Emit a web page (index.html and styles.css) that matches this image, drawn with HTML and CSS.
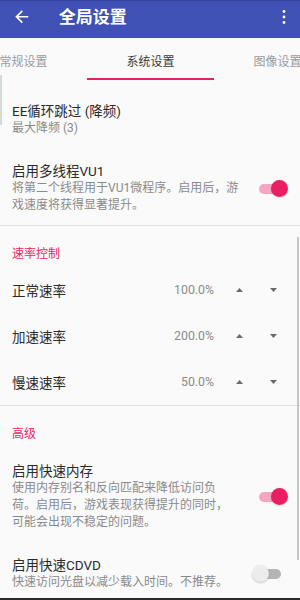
FILE: index.html
```html
<!DOCTYPE html>
<html lang="zh-CN">
<head>
<meta charset="utf-8">
<title>全局设置</title>
<link rel="stylesheet" href="styles.css">
</head>
<body>
<div class="screen">
  <header class="appbar">
    <svg class="back" viewBox="0 0 24 24" width="19.5" height="19.5"><path d="M20 11H7.83l5.59-5.59L12 4l-8 8 8 8 1.41-1.41L7.83 13H20v-2z" fill="#fff"/></svg>
    <div class="title">全局设置</div>
    <svg class="more" viewBox="0 0 4 16" width="4" height="16"><circle cx="2" cy="2.5" r="1.4" fill="#fff"/><circle cx="2" cy="8" r="1.4" fill="#fff"/><circle cx="2" cy="13.5" r="1.4" fill="#fff"/></svg>
  </header>
  <nav class="tabs">
    <div class="tab">常规设置</div>
    <div class="tab active">系统设置</div>
    <div class="tab">图像设置</div>
  </nav>
  <main class="list">
    <div class="pref">
      <div class="text">
        <div class="ptitle">EE循环跳过 (降频)</div>
        <div class="psub">最大降频 (3)</div>
      </div>
    </div>
    <div class="pref last">
      <div class="text">
        <div class="ptitle">启用多线程VU1</div>
        <div class="psub">将第二个线程用于VU1微程序。启用后，游<br>戏速度将获得显著提升。</div>
      </div>
      <div class="switch on"><span class="track"></span><span class="thumb"></span></div>
    </div>
    <div class="divider"></div>
    <div class="section">速率控制</div>
    <div class="rate">
      <div class="rlabel">正常速率</div>
      <div class="rvalue">100.0%</div>
      <div class="rbtn"><svg viewBox="0 0 7 4" width="7" height="4"><polygon points="0,4 3.5,0 7,4" fill="#6a6a6a"/></svg></div>
      <div class="rbtn"><svg viewBox="0 0 7 4" width="7" height="4"><polygon points="0,0 7,0 3.5,4" fill="#6a6a6a"/></svg></div>
    </div>
    <div class="rate">
      <div class="rlabel">加速速率</div>
      <div class="rvalue">200.0%</div>
      <div class="rbtn"><svg viewBox="0 0 7 4" width="7" height="4"><polygon points="0,4 3.5,0 7,4" fill="#6a6a6a"/></svg></div>
      <div class="rbtn"><svg viewBox="0 0 7 4" width="7" height="4"><polygon points="0,0 7,0 3.5,4" fill="#6a6a6a"/></svg></div>
    </div>
    <div class="rate">
      <div class="rlabel">慢速速率</div>
      <div class="rvalue">50.0%</div>
      <div class="rbtn"><svg viewBox="0 0 7 4" width="7" height="4"><polygon points="0,4 3.5,0 7,4" fill="#6a6a6a"/></svg></div>
      <div class="rbtn"><svg viewBox="0 0 7 4" width="7" height="4"><polygon points="0,0 7,0 3.5,4" fill="#6a6a6a"/></svg></div>
    </div>
    <div class="divider"></div>
    <div class="section sec2">高级</div>
    <div class="pref">
      <div class="text">
        <div class="ptitle">启用快速内存</div>
        <div class="psub">使用内存别名和反向匹配来降低访问负<br>荷。启用后，游戏表现获得提升的同时，<br>可能会出现不稳定的问题。</div>
      </div>
      <div class="switch on"><span class="track"></span><span class="thumb"></span></div>
    </div>
    <div class="pref">
      <div class="text">
        <div class="ptitle">启用快速CDVD</div>
        <div class="psub">快速访问光盘以减少载入时间。不推荐。</div>
      </div>
      <div class="switch"><span class="track"></span><span class="thumb"></span></div>
    </div>
  </main>
  <div class="edge"></div>
  <div class="scrollbar"></div>
  <div class="bottomline"></div>
</div>
</body>
</html>
```
FILE: styles.css
```css
html, body {
  margin: 0;
  padding: 0;
}
body {
  background: #fafafa;
  font-family: Roboto, "Noto Sans CJK SC", sans-serif;
}
.screen {
  position: relative;
  width: 300px;
  height: 600px;
  overflow: hidden;
  background: #fafafa;
}
.appbar {
  height: 38px;
  box-sizing: border-box;
  padding-bottom: 5px;
  background: #3f51b5;
  display: flex;
  align-items: center;
  border-top: 1px solid #34449a;
}
.back {
  margin-left: 11.75px;
  flex: 0 0 auto;
}
.title {
  margin-left: 27.5px;
  color: #fff;
  font-size: 17px;
  font-weight: 700;
  line-height: 20px;
  flex: 1;
}
.more {
  margin-right: 14.5px;
}
.tabs {
  height: 42px;
  display: flex;
  margin-left: -40px;
  background: #fafafa;
}
.tab {
  flex: 0 0 127px;
  box-sizing: border-box;
  padding-top: 4px;
  border-bottom: 2px solid transparent;
  display: flex;
  align-items: center;
  justify-content: center;
  font-size: 12px;
  color: #9a9a9a;
}
.tab.active {
  color: #3a3a3a;
  border-bottom-color: #e91e63;
}
.list {
  padding-top: 10px;
}
.pref {
  display: flex;
  align-items: center;
  padding: 13px 12px;
}
.pref.last {
  padding-bottom: 11px;
}
.text {
  flex: 1;
  min-width: 0;
}
.ptitle {
  font-size: 13.5px;
  line-height: 17px;
  color: #2a2a2a;
}
.psub {
  font-size: 12px;
  line-height: 17px;
  color: #8a8a8a;
}
.switch {
  position: relative;
  flex: 0 0 36px;
  height: 17px;
  margin-left: 4px;
}
.track {
  position: absolute;
  left: 7px;
  right: 7px;
  top: 3.5px;
  height: 10px;
  border-radius: 5px;
  background: #b5b5b5;
}
.thumb {
  position: absolute;
  left: 0;
  top: 0;
  width: 17px;
  height: 17px;
  border-radius: 50%;
  background: #ececec;
  box-shadow: 0 1px 2px rgba(0,0,0,0.2);
}
.switch.on .track {
  background: #f4a6c2;
}
.switch.on .thumb {
  left: auto;
  right: 0;
  background: #e91e63;
  box-shadow: 0 1px 2px rgba(0,0,0,0.15);
}
.divider {
  height: 1px;
  background: #e2e2e2;
}
.section {
  padding: 20px 12px 5px;
  font-size: 12px;
  line-height: 16px;
  color: #e91e63;
}
.section.sec2 {
  padding-bottom: 7.5px;
}
.rate {
  height: 46px;
  display: flex;
  align-items: center;
  padding: 0 10px 0 12px;
}
.rlabel {
  flex: 1;
  font-size: 13.5px;
  color: #2a2a2a;
}
.rvalue {
  font-size: 12.3px;
  color: #8a8a8a;
  margin-right: 8px;
}
.rbtn {
  width: 34px;
  height: 34px;
  display: flex;
  align-items: center;
  justify-content: center;
}
.edge {
  position: absolute;
  left: 0;
  top: 75px;
  width: 2px;
  height: 50px;
  background: #d3dbd8;
}
.scrollbar {
  position: absolute;
  right: 1px;
  top: 237px;
  width: 2px;
  height: 323px;
  background: #c6c6c6;
}
.bottomline {
  position: absolute;
  left: 0;
  right: 0;
  bottom: 0;
  height: 2px;
  background: #2b2b2b;
}
```
